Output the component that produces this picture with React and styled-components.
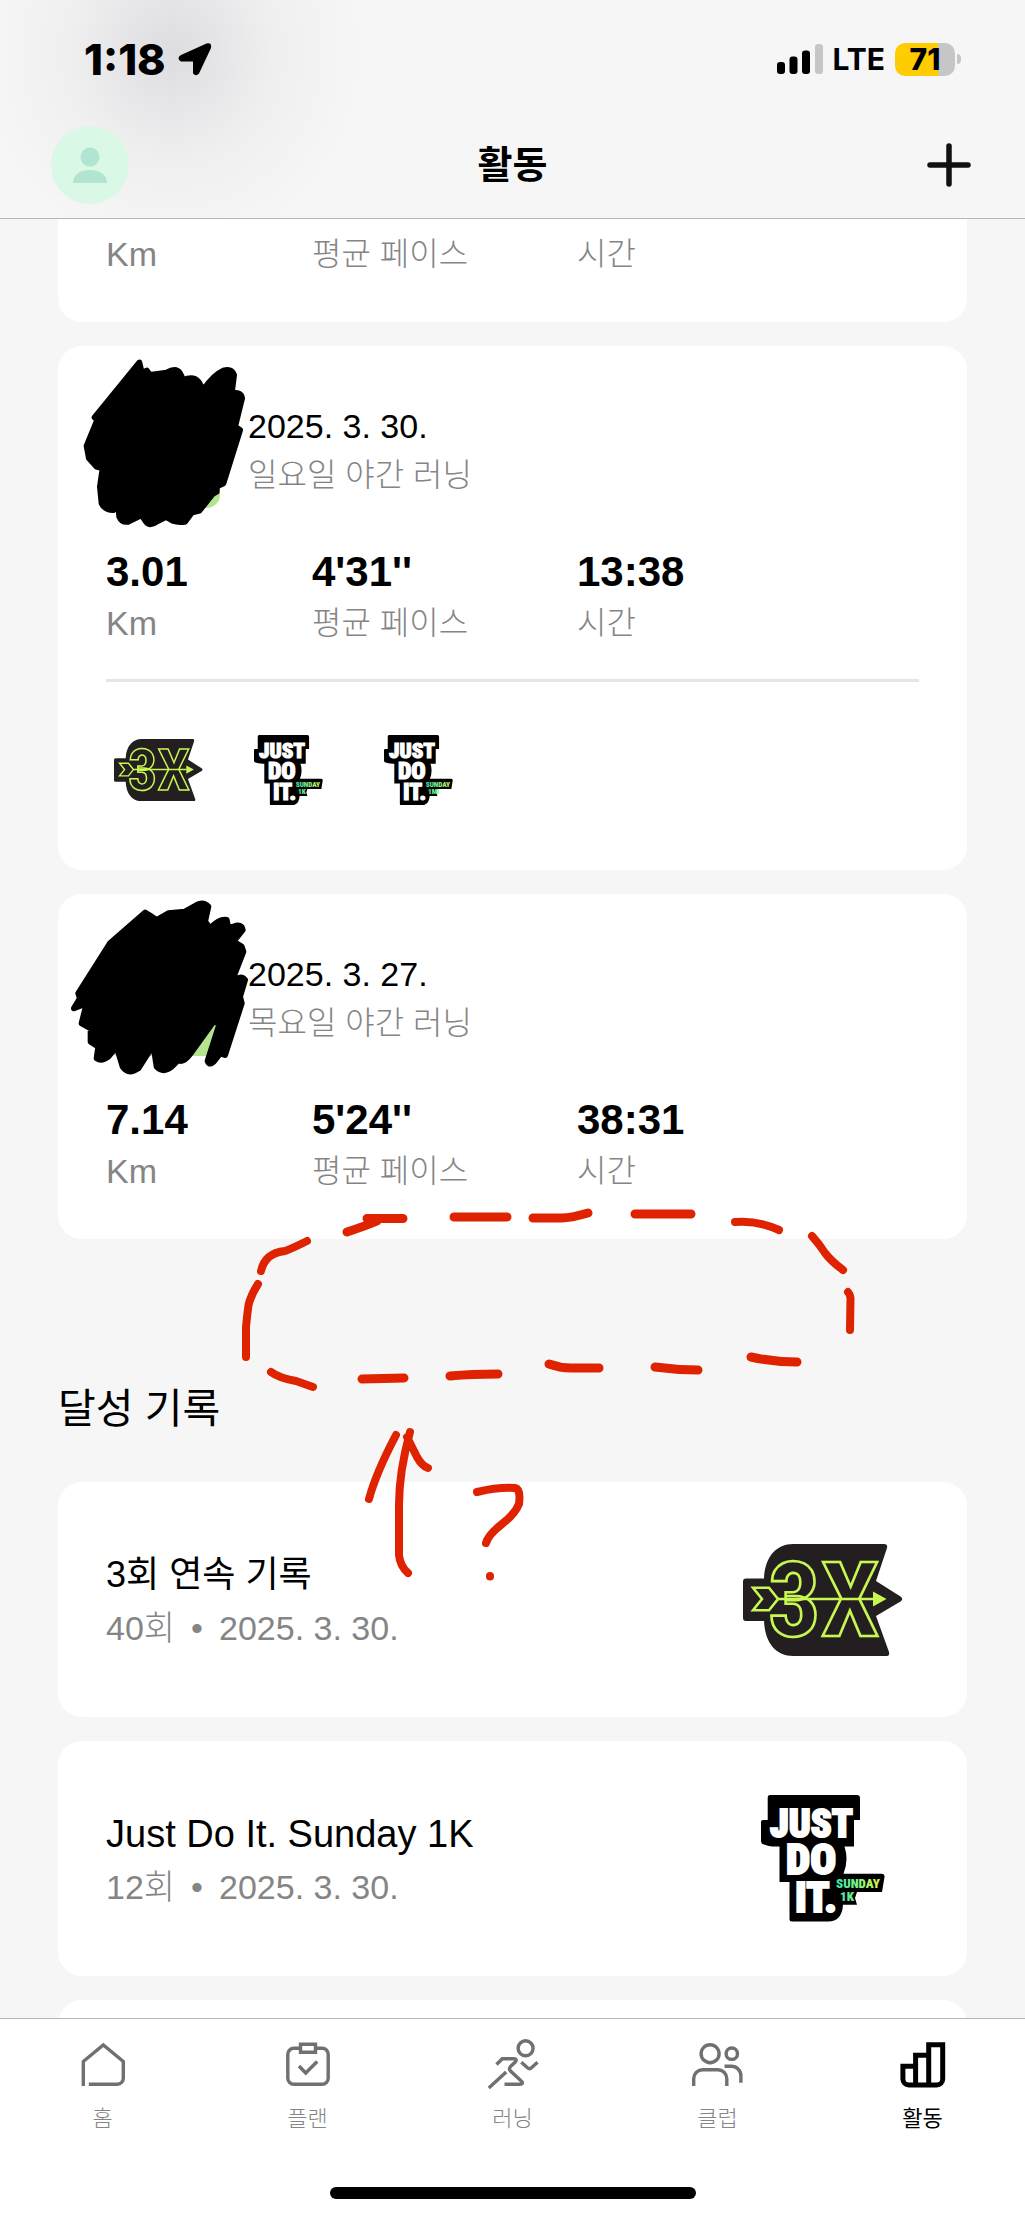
import React from 'react';
import styled, {createGlobalStyle, css} from 'styled-components';


const GlobalStyle = createGlobalStyle`
  * {
    box-sizing: border-box;
  }

  body {
    margin: 0;
    background: #f6f6f6;
    color: #000;
    font-family: "Liberation Sans", "Noto Sans CJK KR", sans-serif;
  }

  h1, h2, h3, p, dl, dt, dd {
    margin: 0;
    font-weight: 400;
  }
`;

const Screen = styled.div`
  position: relative;
  display: flex;
  flex-direction: column;
  height: 100vh;
  overflow: hidden;
`;

const Header = styled.header`
  flex-shrink: 0;
  padding-bottom: 6px;
  border-bottom: 1px solid #b8b8b8;
  background:
    radial-gradient(ellipse 190px 200px at 172px 52px, rgba(196, 196, 202, 0.5), rgba(220, 220, 224, 0.25) 55%, rgba(246, 246, 246, 0)),
    #f6f6f6;
`;

const StatusBar = styled.div`
  display: flex;
  align-items: center;
  justify-content: space-between;
  height: 118px;
  padding: 0 64px 0 84px;
  font-family: Inter, sans-serif;
`;

const StatusGroup = styled.div`
  display: flex;
  align-items: center;
  gap: ${props => props.$gap}px;
`;

const Clock = styled.span`
  font-size: 43px;
  font-weight: 800;
`;

const Network = styled.span`
  font-size: 30px;
  font-weight: 700;
`;

const Battery = styled.span`
  display: flex;
  align-items: center;
  gap: 2px;

  &::after {
    content: "";
    width: 4px;
    height: 10px;
    border-radius: 0 5px 5px 0;
    background: #c6c6c6;
  }
`;

const BatteryBody = styled.span`
  width: 60px;
  border-radius: 10px;
  background: linear-gradient(to right, #ffcc00 71%, #c6c6c6 71%);
  font-size: 30px;
  font-weight: 800;
  line-height: 33px;
  text-align: center;
`;

const NavBar = styled.div`
  display: grid;
  grid-template-columns: 1fr auto 1fr;
  align-items: center;
  height: 94px;
  padding: 0 51px;
`;

const IconButton = styled.button`
  display: flex;
  justify-self: ${props => props.$side};
  padding: 0;
  border: 0;
  border-radius: 50%;
  background: none;
`;

const PageTitle = styled.h1`
  font-size: 38px;
  font-weight: 700;
  line-height: 56px;
`;

const Content = styled.main`
  display: flex;
  flex: 1;
  flex-direction: column;
  gap: 24px;
  min-height: 0;
  padding: 0 58px;
  overflow: hidden;
`;

const Card = styled.article`
  flex-shrink: 0;
  padding: 48px 48px 43px;
  border-radius: 24px;
  background: #fff;

  ${props => props.$cut && css`
    padding-top: 10px;
    border-radius: 0 0 24px 24px;
  `}
`;

const RunHead = styled.div`
  display: flex;
  align-items: center;
  gap: 28px;
  margin-bottom: 38px;
`;

const Thumb = styled.svg`
  width: 114px;
  height: 114px;
  overflow: visible;
`;

const RunDate = styled.h3`
  font-size: 34px;
  line-height: 48px;
`;

const Muted = styled.p`
  color: #858585;
  font-size: ${props => props.$ko ? 32 : 34}px;
  font-weight: 300;
  line-height: 50px;
`;

const Stats = styled.dl`
  display: grid;
  grid-template-columns: 206fr 265fr 342fr;
`;

const Stat = styled.div`
  display: flex;
  flex-direction: column-reverse;
`;

const StatValue = styled.dd`
  font-size: 42px;
  font-weight: 700;
  font-kerning: none;
  line-height: 52px;
`;

const StatLabel = styled.dt`
  color: #858585;
  font-size: ${props => props.$ko ? 32 : 34}px;
  font-weight: 300;
  line-height: 50px;
`;

const Badges = styled.div`
  display: flex;
  gap: 26px;
  margin-top: 31px;
  padding: 51px 0 20px;
  border-top: 3px solid #e5e5e5;
`;

const BadgeSlot = styled.div`
  display: flex;
  align-items: center;
  justify-content: center;
  width: ${props => props.$large ? 160 : 104}px;
  height: ${props => props.$large ? 127 : 74}px;
`;

const SectionTitle = styled.h2`
  flex-shrink: 0;
  margin: 118px 0 21px;
  font-size: 41px;
  line-height: 56px;
`;

const Achievement = styled.article`
  display: flex;
  flex-shrink: 0;
  align-items: center;
  justify-content: space-between;
  height: 235px;
  padding: 0 64px 0 48px;
  border-radius: 24px;
  background: #fff;
`;

const AchievementTitle = styled.h3`
  font-size: ${props => props.$ko ? 36 : 38}px;
  line-height: 56px;
`;

const Meta = styled(Muted)`
  display: flex;
  gap: 16px;
`;

const TabBar = styled.nav`
  position: relative;
  flex-shrink: 0;
  height: 200px;
  border-top: 1px solid #b8b8b8;
  background: #fff;
`;

const Tabs = styled.div`
  display: grid;
  grid-template-columns: repeat(5, 1fr);
  padding-top: 17px;
`;

const Tab = styled.a`
  display: flex;
  flex-direction: column;
  align-items: center;
  gap: 9px;
  color: ${props => props.$active ? '#000' : '#858585'};
  font-size: 22px;
  font-weight: ${props => props.$active ? 400 : 300};
  line-height: 32px;
  text-decoration: none;
`;

const TabIcon = styled.svg`
  width: 58px;
  height: 58px;
  fill: none;
  stroke: ${props => props.$active ? '#000' : '#707072'};
  stroke-width: ${props => props.$active ? 5 : 3.4};
`;

const HomeIndicator = styled.div`
  width: 366px;
  height: 12px;
  margin: 52px auto 0;
  border-radius: 6px;
  background: #000;
`;

const Ink = styled.svg`
  position: absolute;
  top: 0;
  left: 0;
  width: 100%;
  pointer-events: none;
  fill: none;
  stroke: #df2200;
  stroke-width: 8;
  stroke-linecap: round;
  stroke-linejoin: round;
`;

const LogoText = styled.text`
  font-family: "Roboto Condensed", "Open Sans Condensed", "Noto Sans Condensed", Lato, sans-serif;
  font-weight: ${props => props.$outline ? 700 : 900};
`;

const StreakBadge = ({width}) => (
  <svg width={width} viewBox="0 0 160 112" role="img" aria-label="3X">
    <path
      d="M3 34.5H21C22 12 34 0 50 0H141Q145 0 144 4L133 37L157.500 52.500Q161 55 157.500 57.500L133 72L146 108Q147 112 143 112H50C34 112 22 100 21 77H3Q0 77 0 74V37.500Q0 34.500 3 34.500Z"
      fill="#231f20"
    />
    <g fill="none" stroke="#c8f751" strokeWidth="2.600">
      <LogoText $outline x="25" y="92" fontSize="104">3</LogoText>
      <LogoText $outline x="78" y="92" fontSize="104">X</LogoText>
      <path d="M10 43.700H26L35 55L26 66.300H10L19 55Z" />
      <path d="M35 55H130" />
    </g>
    <path d="M130 47.500L143.500 55L130 62.500Z" fill="#c8f751" />
  </svg>
);

const JustDoItBadge = ({width, distance, id}) => (
  <svg width={width} viewBox="0 0 124 127" role="img" aria-label={`Just Do It. Sunday ${distance}`}>
    <defs>
      <linearGradient id={id} gradientUnits="userSpaceOnUse" x1="73" y1="0" x2="120" y2="0">
        <stop offset="0" stopColor="#2fe3b4" />
        <stop offset="0.500" stopColor="#7df28a" />
        <stop offset="1" stopColor="#dcf84a" />
      </linearGradient>
    </defs>
    <path
      d="M9 0H96Q99 0 99 3V25H93V51.500H83.500Q88 65 82.500 78.700H121Q124 79 123.500 82L121 97H96L94 103L96 109.700H82Q81 126.500 67 126.500H31Q28.500 126.500 28.500 124V87H18.500V51.500Q8 52 1.500 49Q0 48 0 46V27Q0 25 2 25H6.700V3Q6.700 0 9 0Z"
      fill="#000"
    />
    <g fill="#fff" stroke="#fff" strokeWidth="2">
      <LogoText x="9" y="42" fontSize="38">JUST</LogoText>
      <LogoText x="25" y="79" fontSize="43">DO</LogoText>
      <LogoText x="34" y="117" fontSize="42">IT.</LogoText>
    </g>
    <g fill={`url(#${id})`}>
      <LogoText x="75" y="93" fontSize="13">SUNDAY</LogoText>
      <LogoText x="79" y="106" fontSize="13">{distance}</LogoText>
    </g>
  </svg>
);

const runs = [
  {
    date: '2025. 3. 30.',
    name: '일요일 야간 러닝',
    distance: '3.01',
    pace: "4'31''",
    time: '13:38',
    badges: true,
    box: '168 162 342 342',
    scribble: 'M268 68L134 232L142 240L110 318L117 355L140 380L158 385L150 440L155 490Q165 510 190 510L205 500L208 530Q215 548 235 545L275 525L288 545Q300 560 320 545L350 530Q370 550 405 545L425 518L448 512L488 462L500 455V440L520 430L570 270L555 260L576 175Q574 155 545 160L552 105Q545 85 520 92Q490 105 460 150L445 125Q430 108 400 120L390 100Q378 82 350 98L300 105L290 92L275 98Z',
  },
  {
    date: '2025. 3. 27.',
    name: '목요일 야간 러닝',
    distance: '7.14',
    pace: "5'24''",
    time: '38:31',
    badges: false,
    box: '168 186 342 342',
    scribble: 'M285 98L180 190L85 340L90 355L72 385L110 370L95 430L122 445L122 485L145 500L140 535Q155 545 175 530L200 500L218 560Q235 585 265 565L310 495L320 560Q340 580 365 560L385 540Q400 550 422 520L490 425L509 430L473 543Q480 560 495 540L510 520L525 525L575 370L570 350L585 300Q575 285 555 300L545 305L580 215L575 200L550 185L578 150Q575 130 550 140L535 145L530 120Q510 115 480 145L465 125L475 80Q460 65 440 75L405 95L355 100L320 120L305 110Z',
  },
];

const tabs = [
  {
    name: '홈',
    icon: <path d="M9.300 50V25.500L29.300 9L49.300 25.500V42A6 6 0 0 1 43.300 48.300H14.800" />,
  },
  {
    name: '플랜',
    icon: (
      <>
        <path d="M21.500 12.300H15A6 6 0 0 0 8.800 18.300V42.300A6 6 0 0 0 14.800 48.300H43.200A6 6 0 0 0 49.200 42.300V18.300A6 6 0 0 0 43.200 12.300H36.500" />
        <path d="M21.500 8.300H36.500V16.300H21.500ZM20 30L26.700 37L38.200 25.500" />
      </>
    ),
  },
  {
    name: '러닝',
    icon: (
      <>
        <circle cx="41.600" cy="12.300" r="7.500" />
        <path d="M37.300 26.300L43.500 31.800Q45.600 33.500 47.500 31.800L53.500 26.300" />
        <path d="M12.500 28.500L18.300 22.700H30Q33.500 23 31.500 25.800L26.500 30.500Q24.500 33 26.500 35L37.800 45.500Q39.500 48.300 36 48.300H20.500" />
        <path d="M4.800 52L22.200 36" />
      </>
    ),
  },
  {
    name: '클럽',
    icon: (
      <>
        <circle cx="21.100" cy="17.700" r="9" />
        <circle cx="42.800" cy="17.700" r="5.700" />
        <path d="M4.700 50V42.500A9 9 0 0 1 13.700 33.700H28.800A9 9 0 0 1 37.800 42.500V50" />
        <path d="M35.500 30.300H42A9.500 9.500 0 0 1 51.900 40V46.700" />
      </>
    ),
  },
  {
    name: '활동',
    active: true,
    icon: (
      <path d="M21.600 30.300H8.900V43A6 6 0 0 0 14.900 49H42.700A6 6 0 0 0 48.700 43V8.700H34.700V49M34.700 19.300H21.600V49" />
    ),
  },
];

const StatItem = ({label, value, ko}) => (
  <Stat>
    <StatLabel $ko={ko}>{label}</StatLabel>
    {value && <StatValue>{value}</StatValue>}
  </Stat>
);

const RunStats = ({run}) => (
  <Stats>
    <StatItem label="Km" value={run.distance} />
    <StatItem label="평균 페이스" value={run.pace} ko />
    <StatItem label="시간" value={run.time} ko />
  </Stats>
);

const RunCard = ({run}) => (
  <Card>
    <RunHead>
      <Thumb viewBox={run.box} aria-hidden="true">
        <rect x="168" y={run.box.split(' ')[1]} width="342" height="342" rx="40" fill="#b5e48f" />
        <path d={run.scribble} fill="#000" stroke="#000" strokeWidth="18" strokeLinejoin="round" />
      </Thumb>
      <div>
        <RunDate>{run.date}</RunDate>
        <Muted $ko>{run.name}</Muted>
      </div>
    </RunHead>
    <RunStats run={run} />
    {run.badges && (
      <Badges>
        <BadgeSlot><StreakBadge width={89} /></BadgeSlot>
        <BadgeSlot><JustDoItBadge width={69} distance="1K" id="run1k" /></BadgeSlot>
        <BadgeSlot><JustDoItBadge width={69} distance="1MI" id="run1mi" /></BadgeSlot>
      </Badges>
    )}
  </Card>
);

const AchievementCard = ({title, ko, count, date, children}) => (
  <Achievement>
    <div>
      <AchievementTitle $ko={ko}>{title}</AchievementTitle>
      <Meta>
        <span>{count}</span>
        <span>•</span>
        <span>{date}</span>
      </Meta>
    </div>
    <BadgeSlot $large>{children}</BadgeSlot>
  </Achievement>
);

const App = () => {
  return (
    <Screen>
      <GlobalStyle />
      <Header>
        <StatusBar>
          <StatusGroup $gap={12}>
            <Clock>1:18</Clock>
            <svg width="34" height="34" viewBox="0 0 34 34" aria-hidden="true">
              <path d="M3 13L28.500 1.500Q34 0 33 6L21 31.500Q18 35 15 31.500V19.500H3Q-2 16 3 13Z" />
            </svg>
          </StatusGroup>
          <StatusGroup $gap={10}>
            <svg width="46" height="30" viewBox="0 0 46 30" aria-hidden="true">
              <rect y="18" width="8" height="12" rx="3" />
              <rect x="12.500" y="12.500" width="8" height="17.500" rx="3" />
              <rect x="25" y="6.500" width="8" height="23.500" rx="3" />
              <rect x="38" width="8" height="30" rx="3" fill="#c6c6c6" />
            </svg>
            <Network>LTE</Network>
            <Battery>
              <BatteryBody>71</BatteryBody>
            </Battery>
          </StatusGroup>
        </StatusBar>
        <NavBar>
          <IconButton $side="start" aria-label="프로필">
            <svg width="78" height="78" viewBox="0 0 78 78">
              <circle cx="39" cy="39" r="39" fill="#d9f8e5" />
              <circle cx="39" cy="31" r="9.500" fill="#b2e4d2" />
              <path d="M22 57C22 48 30 44 39 44S56 48 56 57Z" fill="#b2e4d2" />
            </svg>
          </IconButton>
          <PageTitle>활동</PageTitle>
          <IconButton $side="end" aria-label="추가">
            <svg width="50" height="50" viewBox="0 0 50 50">
              <path d="M25 6V44M6 25H44" stroke="#111" strokeWidth="5.500" strokeLinecap="round" />
            </svg>
          </IconButton>
        </NavBar>
      </Header>

      <Content>
        <Card $cut>
          <RunStats run={{}} />
        </Card>
        {runs.map(run => <RunCard key={run.date} run={run} />)}
        <SectionTitle>달성 기록</SectionTitle>
        <AchievementCard title="3회 연속 기록" ko count="40회" date="2025. 3. 30.">
          <StreakBadge width={160} />
        </AchievementCard>
        <AchievementCard title="Just Do It. Sunday 1K" count="12회" date="2025. 3. 30.">
          <JustDoItBadge width={124} distance="1K" id="best1k" />
        </AchievementCard>
        <Achievement />
      </Content>

      <TabBar>
        <Tabs>
          {tabs.map(tab => (
            <Tab key={tab.name} href="#" $active={tab.active}>
              <TabIcon viewBox="0 0 58 58" $active={tab.active} aria-hidden="true">{tab.icon}</TabIcon>
              {tab.name}
            </Tab>
          ))}
        </Tabs>
        <HomeIndicator />
      </TabBar>

      {/* hand drawn marks over the list */}
      <Ink viewBox="0 0 1025 2218" aria-hidden="true">
        <path d="M367 1218.500H403M347 1232Q368 1225 377 1221M454 1217H507M533 1218H562Q570 1218 588 1213M635 1214H691" strokeWidth="9" />
        <path d="M735 1222Q757 1220 779 1230M812 1236Q820 1245 825 1253Q831 1261 843 1270M848 1292Q850 1294 850.500 1298L850 1330" />
        <path d="M751 1357Q773 1362 797 1362M655 1367Q677 1370 698 1370M549 1364Q560 1368 571 1368H599M450 1376Q472 1374 498 1374M362 1379L404 1378" strokeWidth="9" />
        <path d="M271 1372Q279 1378 296 1381L313 1387M246 1357V1327Q247 1316 248.500 1305Q251 1295 258 1284M261 1271Q265 1253 285 1251Q291 1249 307 1241" />
        <path d="M396 1435Q376 1473 369 1499M410 1432Q399 1472 399 1505V1555Q400 1566 408 1573M407 1437L417 1457Q422 1466 428 1468" />
        <path d="M477 1492Q498 1487 515 1488Q521 1489 519 1504Q515 1514 502 1524Q488 1535 486 1543M490 1576V1576.500" />
      </Ink>
    </Screen>
  );
};

export default App;
